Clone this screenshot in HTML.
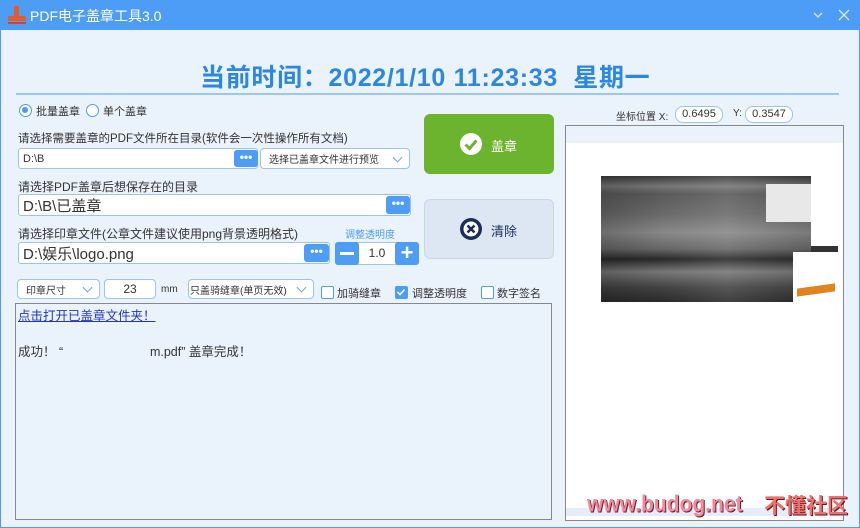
<!DOCTYPE html>
<html><head><meta charset="utf-8"><style>
*{box-sizing:border-box;margin:0;padding:0}
body{width:860px;height:528px;overflow:hidden;background:#eaf2fc;font-family:"Liberation Sans","Noto Sans CJK SC",sans-serif;font-size:12px;color:#333;position:relative}
.a{position:absolute}
.tb{left:0;top:0;width:860px;height:30px;background:#4d9cf6;color:#fff;font-size:14px}
.win{left:0;top:30px;width:860px;height:498px;border:1px solid #4d9cf6;border-top:none}
.inp{background:#fff;border:1px solid #9cc3ee;border-radius:3px;padding-left:4px;display:flex;align-items:center}
.dots{background:#4d9cf6;border-radius:3px;color:#fff;font-weight:bold;text-align:center;font-size:12px;line-height:8px}
.sel{background:#fff;border:1px solid #9cc3ee;border-radius:4px;display:flex;align-items:center;padding-left:8px;font-size:11px}
.chev{position:absolute;right:8px;top:50%;width:7px;height:7px;border-right:1.5px solid #6aa5e6;border-bottom:1.5px solid #6aa5e6;transform:translateY(-70%) rotate(45deg)}
.cb{width:13px;height:13px;border:1.5px solid #4d9cf6;background:#fff;border-radius:2px}
</style></head><body>
<div class="a tb">
 <svg class="a" style="left:6px;top:5px" width="22" height="20"><rect x="8" y="1" width="5" height="10" fill="#e45a2a"/><rect x="2" y="11" width="18" height="5" rx="1" fill="#e45a2a"/><rect x="2" y="17" width="18" height="2" fill="#c44"/></svg>
 <div class="a" style="left:30px;top:6px">PDF电子盖章工具3.0</div>
 <svg class="a" style="left:812px;top:10px" width="12" height="10"><path d="M2 3l4 4 4-4" stroke="#d7e8ff" fill="none" stroke-width="1.3"/></svg>
 <svg class="a" style="left:838px;top:9px" width="12" height="12"><path d="M1 1l10 10M11 1L1 11" stroke="#d7e8ff" stroke-width="1.3"/></svg>
</div>
<div class="a win"></div>
<div class="a" style="left:200px;top:58px;font-size:25px;font-weight:bold;color:#2b86e4;letter-spacing:0.7px">当前时间：2022/1/10 11:23:33&nbsp; 星期一</div>
<div class="a" style="left:16px;top:93px;width:823px;height:2px;background:#9cc7f2"></div>
<div class="a" style="left:19px;top:104px;width:13px;height:13px;border:1.5px solid #4d9cf6;border-radius:50%;background:#fff"><div style="margin:2px;width:6px;height:6px;border-radius:50%;background:#4d9cf6"></div></div>
<div class="a" style="left:36px;top:103px;font-size:11px">批量盖章</div>
<div class="a" style="left:86px;top:104px;width:13px;height:13px;border:1.5px solid #4d9cf6;border-radius:50%;background:#fff"></div>
<div class="a" style="left:103px;top:103px;font-size:11px">单个盖章</div>
<div class="a" style="left:18px;top:130px;font-size:11.5px">请选择需要盖章的PDF文件所在目录(软件会一次性操作所有文档)</div>
<div class="a inp" style="left:18px;top:148px;width:240px;height:21px;font-size:11px">D:\B</div>
<div class="a dots" style="left:234px;top:150px;width:24px;height:17px;line-height:14px">•••</div>
<div class="a sel" style="left:260px;top:148px;width:150px;height:21px;font-size:10px">选择已盖章文件进行预览<i class="chev"></i></div>
<div class="a" style="left:18px;top:178px;font-size:12px">请选择PDF盖章后想保存在的目录</div>
<div class="a inp" style="left:18px;top:194px;width:393px;height:22px;font-size:15px">D:\B\已盖章</div>
<div class="a dots" style="left:386px;top:196px;width:24px;height:18px;line-height:15px">•••</div>
<div class="a" style="left:18px;top:225px;font-size:12px">请选择印章文件(公章文件建议使用png背景透明格式)</div>
<div class="a" style="left:345px;top:226px;font-size:10px;color:#4d9cf6">调整透明度</div>
<div class="a inp" style="left:18px;top:242px;width:312px;height:22px;font-size:15px">D:\娱乐\logo.png</div>
<div class="a dots" style="left:304px;top:244px;width:25px;height:18px;line-height:15px">•••</div>
<div class="a" style="left:335px;top:242px;width:84px;height:23px;background:#fff;border:1px solid #9cc3ee;border-radius:3px;text-align:center;line-height:21px;font-size:12px">1.0</div>
<div class="a" style="left:335px;top:242px;width:24px;height:23px;background:#4d9cf6;border-radius:3px"><div style="margin:10px 5px;height:3px;background:#fff"></div></div>
<div class="a" style="left:395px;top:242px;width:24px;height:23px;background:#4d9cf6;border-radius:3px;color:#fff;font-size:22px;font-weight:bold;text-align:center;line-height:22px">+</div>
<div class="a" style="left:424px;top:114px;width:130px;height:60px;background:#6cb42d;border-radius:6px"></div>
<svg class="a" style="left:459px;top:132px" width="24" height="24"><circle cx="12" cy="12" r="11" fill="#fff"/><path d="M6.5 12.5l4 4 7-8" stroke="#6cb42d" stroke-width="3" fill="none"/></svg>
<div class="a" style="left:491px;top:136px;color:#fff;font-size:13px">盖章</div>
<div class="a" style="left:424px;top:199px;width:130px;height:60px;background:#dde7f3;border:1px solid #cad7e6;border-radius:6px"></div>
<svg class="a" style="left:459px;top:217px" width="24" height="24"><circle cx="12" cy="12" r="11" fill="#1c2c57"/><circle cx="12" cy="12" r="7.5" fill="#fff"/><path d="M8.5 8.5l7 7M15.5 8.5l-7 7" stroke="#1c2c57" stroke-width="2.5"/></svg>
<div class="a" style="left:491px;top:221px;color:#1c2c57;font-size:13px">清除</div>
<div class="a sel" style="left:17px;top:279px;width:83px;height:20px;font-size:10px">印章尺寸<i class="chev"></i></div>
<div class="a sel" style="left:104px;top:279px;width:52px;height:20px;justify-content:center;padding:0;font-size:12px">23</div>
<div class="a" style="left:161px;top:284px;font-size:10px">mm</div>
<div class="a sel" style="left:188px;top:279px;width:126px;height:20px;padding-left:1px;font-size:10px">只盖骑缝章(单页无效)<i class="chev"></i></div>
<div class="a cb" style="left:321px;top:286px"></div>
<div class="a" style="left:337px;top:285px;font-size:11px">加骑缝章</div>
<div class="a cb" style="left:395px;top:286px;background:#4d9cf6"><svg width="10" height="10" style="display:block"><path d="M1.5 5l2.5 2.5 4.5-5" stroke="#fff" stroke-width="1.5" fill="none"/></svg></div>
<div class="a" style="left:412px;top:285px;font-size:11px">调整透明度</div>
<div class="a cb" style="left:481px;top:286px"></div>
<div class="a" style="left:497px;top:285px;font-size:11px">数字签名</div>
<div class="a" style="left:15px;top:303px;width:537px;height:217px;border:1px solid #888;background:#eaf2fc"></div>
<div class="a" style="left:18px;top:305px;font-size:12.5px;color:#2233cc;text-decoration:underline">点击打开已盖章文件夹！</div>
<div class="a" style="left:18px;top:341px;font-size:12.5px">成功！ “&nbsp;&nbsp;&nbsp;&nbsp;&nbsp;&nbsp;&nbsp;&nbsp;&nbsp;&nbsp;&nbsp;&nbsp;&nbsp;&nbsp;&nbsp;&nbsp;&nbsp;&nbsp;&nbsp;&nbsp;&nbsp;&nbsp;&nbsp;&nbsp;&nbsp;m.pdf” 盖章完成！</div>
<div class="a" style="left:616px;top:108px;font-size:10px">坐标位置 X:</div>
<div class="a" style="left:675px;top:106px;width:48px;height:17px;background:#fff;border:1px solid #9cc3ee;border-radius:8px;text-align:center;font-size:11px;line-height:15px">0.6495</div>
<div class="a" style="left:733px;top:108px;font-size:10px">Y:</div>
<div class="a" style="left:745px;top:106px;width:48px;height:17px;background:#fff;border:1px solid #9cc3ee;border-radius:8px;text-align:center;font-size:11px;line-height:15px">0.3547</div>
<div class="a" style="left:565px;top:125px;width:279px;height:396px;border:1px solid #888;background:#fff"></div>
<div class="a" style="left:566px;top:126px;width:277px;height:17px;background:#eaf2fc"></div>
<div class="a" style="left:601px;top:176px;width:210px;height:126px;background:linear-gradient(180deg,#3a3a3a 0%,#777 8%,#5a5a5a 14%,#6a6a6a 30%,#888 45%,#666 58%,#2a2a2a 66%,#777 76%,#444 88%,#2a2a2a 100%)"></div>
<div class="a" style="left:601px;top:176px;width:210px;height:126px;background:linear-gradient(90deg,rgba(0,0,0,.2) 0%,rgba(0,0,0,0) 30%,rgba(255,255,255,.1) 60%,rgba(0,0,0,.1) 100%)"></div>
<div class="a" style="left:766px;top:184px;width:45px;height:38px;background:#e8e8e8"></div>
<div class="a" style="left:811px;top:246px;width:27px;height:6px;background:#333"></div>
<div class="a" style="left:793px;top:252px;width:44px;height:50px;background:#fff"></div>
<div class="a" style="left:797px;top:286px;width:38px;height:8px;background:#e08420;transform:skewY(-8deg)"></div>
<div class="a" style="left:566px;top:508px;width:277px;height:8px;background:#e4ecf7"></div>
<div class="a" style="left:587px;top:493px;font-size:21px;font-weight:bold;color:#f08a9c;font-family:'Liberation Sans',sans-serif;text-shadow:1px 1px 0 #6b1f2b;transform:scaleY(1.1)">www.budog.net</div>
<div class="a" style="left:764px;top:493px;font-size:21px;font-weight:bold;color:#f07070;text-shadow:1px 1px 0 #5a1a1a;font-family:'Noto Sans CJK SC',sans-serif;line-height:24px">不懂社区</div>
</body></html>
